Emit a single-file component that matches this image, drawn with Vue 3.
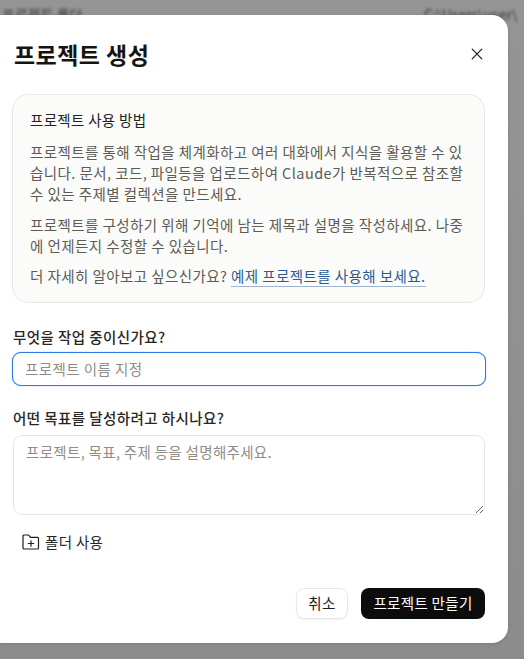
<script setup>
const paragraphs = [
  ['프로젝트를 통해 작업을 체계화하고 여러 대화에서 지식을 활용할 수 있', '습니다. 문서, 코드, 파일등을 업로드하여 Claude가 반복적으로 참조할', '수 있는 주제별 컬렉션을 만드세요.'],
  ['프로젝트를 구성하기 위해 기억에 남는 제목과 설명을 작성하세요. 나중', '에 언제든지 수정할 수 있습니다.']
]
</script>

<template>
  <div class="page">
    <div class="backdrop" aria-hidden="true">
      <span>프로젝트 폴더</span>
      <span>C:\Users\user\</span>
    </div>
    <section class="modal">
      <header class="head">
        <h1>프로젝트 생성</h1>
        <button class="close" aria-label="닫기">
          <svg width="14" height="14" viewBox="0 0 14 14" fill="none" stroke="#1a1a18" stroke-width="1.2" stroke-linecap="round">
            <path d="M2.2 2.2 11.8 11.8M11.8 2.2 2.2 11.8" />
          </svg>
        </button>
      </header>

      <div class="info">
        <h2>프로젝트 사용 방법</h2>
        <p v-for="(lines, i) in paragraphs" :key="i">
          <span v-for="line in lines" :key="line" class="line">{{ line }}</span>
        </p>
        <p class="last">더 자세히 알아보고 싶으신가요? <a href="#">예제 프로젝트를 사용해 보세요.</a></p>
      </div>

      <label class="lbl first">무엇을 작업 중이신가요?</label>
      <input class="name" placeholder="프로젝트 이름 지정" />

      <label class="lbl second">어떤 목표를 달성하려고 하시나요?</label>
      <textarea class="desc" placeholder="프로젝트, 목표, 주제 등을 설명해주세요."></textarea>

      <button class="folder">
        <svg width="18" height="18" viewBox="0 0 18 18" fill="none" stroke="#1f1f1d" stroke-width="1.2" stroke-linejoin="round" stroke-linecap="round">
          <path d="M1 15V3c0-.6.4-1 1-1h4.2c.3 0 .5.1.7.3l1.6 2h7c.6 0 1 .4 1 1V15c0 .6-.4 1-1 1H2c-.6 0-1-.4-1-1Z" />
          <path d="M9 7.8v5.4M6.3 10.5h5.4" />
        </svg>
        <span>폴더 사용</span>
      </button>

      <footer class="actions">
        <button class="cancel"><span>취소</span></button>
        <button class="create"><span>프로젝트 만들기</span></button>
      </footer>
    </section>
  </div>
</template>

<style>
html, body { margin: 0; padding: 0; background: #8f8f8f; }
</style>

<style scoped>
* { box-sizing: border-box; }
.page {
  position: relative;
  width: 524px;
  height: 659px;
  overflow: hidden;
  padding-top: 15px;
  background: linear-gradient(#959595, #8c8c8c);
  font-family: "Noto Sans CJK KR", "Liberation Sans", sans-serif;
  color: #1a1a18;
}
.backdrop {
  position: absolute;
  top: 4px;
  left: 0;
  width: 524px;
  height: 20px;
  display: flex;
  justify-content: space-between;
  padding: 0 0 0 2px;
  font-size: 14px;
  color: #3c3c3c;
  filter: blur(1.4px);
  white-space: nowrap;
  overflow: hidden;
}
.backdrop span:last-child { width: 100px; overflow: hidden; }
.modal {
  position: relative;
  width: 508px;
  height: 628px;
  background: #fff;
  border-radius: 0 16px 16px 0;
  padding: 0 23px 0 13px;
  display: flex;
  flex-direction: column;
  box-shadow: 0 1px 4px rgba(0, 0, 0, 0.12);
}
.head {
  height: 79px;
  display: flex;
  align-items: center;
  justify-content: space-between;
  padding-bottom: 2px;
}
h1 {
  margin: 0 0 0 1px;
  font-size: 23px;
  line-height: 30px;
  font-weight: 700;
  color: #141413;
  letter-spacing: 0.45px;
}
.close {
  width: 30px;
  height: 30px;
  margin-right: -7px;
  margin-left: 0;
  padding: 0 1px 0 0;
  border: 0;
  background: none;
  display: flex;
  align-items: center;
  justify-content: center;
}
.info {
  width: 473px;
  height: 209px;
  margin-left: -1px;
  padding: 14px 0 0 17px;
  background: #fbfbf9;
  border: 1px solid #e9e8e5;
  border-radius: 16px;
}
h2, .desc, .folder, .actions button {
  font-size: 14.5px;
  letter-spacing: 0.32px;
}
p, .lbl, .name {
  font-size: 14.5px;
  letter-spacing: 0.43px;
}
h2 {
  margin: 0 0 11px;
  line-height: 21px;
  font-weight: 400;
  color: #23231f;
}
p {
  margin: 0 0 9.5px;
  line-height: 21px;
  color: #5c5b56;
}
.line { display: block; white-space: nowrap; }
.last { white-space: nowrap; }
a {
  color: #2a5b97;
  text-decoration: none;
  border-bottom: 1px solid #9db4d0;
}
.lbl {
  display: block;
  line-height: 20px;
  font-weight: 500;
  color: #262624;
}
.first { margin-top: 24px; }
.second { margin-top: 22px; }
.name, .desc {
  display: block;
  font-family: inherit;
  background: #fff;
  outline: 0;
  color: #1a1a18;
}
.name::placeholder, .desc::placeholder { color: #8e8d88; opacity: 1; }
.name {
  width: 474px;
  height: 34px;
  margin-top: 5px;
  margin-left: -1px;
  padding: 0 12px 2px;
  border: 1px solid #2c7be5;
  border-radius: 9px;
  box-shadow: 0 0 1px #2c7be5;
}
.desc {
  width: 472px;
  height: 80px;
  margin-top: 7px;
  padding: 5px 12px;
  line-height: 22px;
  border: 1px solid #e6e5e2;
  border-radius: 9px;
  resize: vertical;
}
.folder {
  display: flex;
  align-items: center;
  gap: 5px;
  margin: 15px 0 0 9px;
  padding: 0;
  border: 0;
  background: none;
  height: 24px;
  font-family: inherit;
  color: #262624;
  align-self: flex-start;
}
.folder span { position: relative; top: -1px; }
.actions {
  display: flex;
  justify-content: flex-end;
  gap: 13px;
  margin-top: 34px;
}
.actions button {
  height: 31px;
  font-family: inherit;
  border-radius: 8px;
  padding: 0 0 3px;
}
.cancel {
  width: 52px;
  background: #fff;
  color: #1a1a18;
  border: 1px solid #e9e8e5;
  box-shadow: 0 1px 2px rgba(0, 0, 0, 0.06);
}
.create {
  width: 124px;
  background: #0c0c0c;
  color: #fff;
  border: 0;
}
</style>
